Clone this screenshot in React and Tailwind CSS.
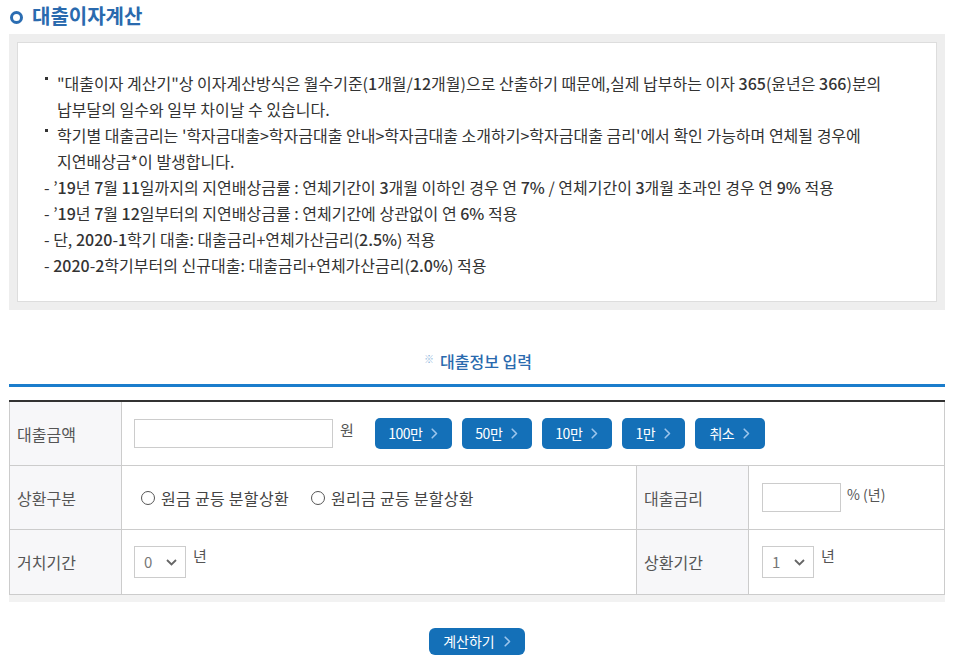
import React from "react";

const font = { fontFamily: '"Noto Sans CJK KR", "Noto Sans", sans-serif' };

function T({ children }) {
  const parts = String(children).split(/(\d+(?:[.]\d+)?%?)/);
  return (
    <>
      {parts.map((p, i) =>
        i % 2 === 1 ? (
          <span key={i} className="font-medium">{p}</span>
        ) : (
          <React.Fragment key={i}>{p}</React.Fragment>
        )
      )}
    </>
  );
}

function Chevron() {
  return (
    <svg width="7" height="11" viewBox="0 0 7 11" fill="none">
      <path d="M1.2 1.2 L5.5 5.5 L1.2 9.8" stroke="#9cc5ec" strokeWidth="1.6" strokeLinecap="round" strokeLinejoin="round" />
    </svg>
  );
}

function Btn({ label, w }) {
  return (
    <button className={`h-[31px] ${w} rounded-[5px] bg-[#1470b8] text-white text-[14px] flex items-center justify-center gap-[9px] tracking-[-0.5px]`}>
      <span>{label}</span>
      <Chevron />
    </button>
  );
}

function Select({ value }) {
  return (
    <div className="w-[52px] h-[32px] border border-[#cccccc] flex items-center justify-between pl-[9px] pr-[8px] text-[15px] text-[#777]">
      <span>{value}</span>
      <svg width="11" height="7" viewBox="0 0 11 7" fill="none">
        <path d="M1 1 L5.5 5.5 L10 1" stroke="#666" strokeWidth="1.8" />
      </svg>
    </div>
  );
}

function Radio({ label }) {
  return (
    <div className="flex items-center gap-[6px]">
      <span className="w-[14px] h-[14px] rounded-full border border-[#555] bg-white"></span>
      <span>{label}</span>
    </div>
  );
}

function Bullet({ children }) {
  return (
    <div className="flex">
      <span className="w-[13px] shrink-0 flex pt-[7px] pl-[1px]">
        <span className="w-[3px] h-[3px] bg-[#333] block"></span>
      </span>
      <div>{children}</div>
    </div>
  );
}

export default function App() {
  return (
    <div className="w-[967px] h-[669px] bg-white pl-[9px] pr-[22px] overflow-hidden text-[#333]" style={font}>
      {/* title */}
      <div className="h-[34px] flex items-center gap-[9px] pl-[1px]">
        <span className="w-[13px] h-[13px] rounded-full border-[3.5px] border-[#2b6db2] mt-[1px]"></span>
        <h1 className="text-[20px] font-bold text-[#2a6aae] leading-none -mt-[2px]">대출이자계산</h1>
      </div>

      {/* notes */}
      <div className="bg-[#eeeeee] p-[8px]">
        <div className="bg-white border border-[#dddddd] pt-[27px] pb-[23px] pl-[26px] text-[16px] leading-[26px]">
          <Bullet>
            <T>"대출이자 계산기"상 이자계산방식은 월수기준(1개월/12개월)으로 산출하기 때문에,실제 납부하는 이자 365(윤년은 366)분의</T>
            <br />
            납부달의 일수와 일부 차이날 수 있습니다.
          </Bullet>
          <Bullet>
            학기별 대출금리는 '학자금대출&gt;학자금대출 안내&gt;학자금대출 소개하기&gt;학자금대출 금리'에서 확인 가능하며 연체될 경우에
            <br />
            지연배상금*이 발생합니다.
          </Bullet>
          <div><T>- ’19년 7월 11일까지의 지연배상금률 : 연체기간이 3개월 이하인 경우 연 7% / 연체기간이 3개월 초과인 경우 연 9% 적용</T></div>
          <div><T>- ’19년 7월 12일부터의 지연배상금률 : 연체기간에 상관없이 연 6% 적용</T></div>
          <div><T>- 단, 2020-1학기 대출: 대출금리+연체가산금리(2.5%) 적용</T></div>
          <div><T>- 2020-2학기부터의 신규대출: 대출금리+연체가산금리(2.0%) 적용</T></div>
        </div>
      </div>

      {/* section title */}
      <div className="mt-[39px] h-[35px] flex justify-center items-start">
        <div className="flex items-center gap-[6px] text-[#2a6aae] text-[16px] font-medium ml-[2px]">
          <span className="text-[10px] text-[#8ab4dc] -mt-[6px]">※</span>
          <span>대출정보 입력</span>
        </div>
      </div>
      <div className="h-[3px] bg-[#1b7dcc]"></div>

      {/* table */}
      <div className="mt-[13px] border-t-2 border-[#333333] text-[16px] text-[#555]">
        <div className="flex h-[64px] border-b border-[#cccccc]">
          <div className="w-[113px] shrink-0 bg-[#f7f7f9] border-l border-r border-[#cccccc] flex items-center pl-[7px]">대출금액</div>
          <div className="flex-1 border-r border-[#cccccc] flex items-center pl-[12px]">
            <div className="w-[199px] h-[29px] border border-[#cccccc]"></div>
            <span className="ml-[7px] -mt-[6px] text-[15px]">원</span>
            <div className="ml-[21px] flex gap-[10px]">
              <Btn label="100만" w="w-[77px]" />
              <Btn label="50만" w="w-[70px]" />
              <Btn label="10만" w="w-[70px]" />
              <Btn label="1만" w="w-[63px]" />
              <Btn label="취소" w="w-[70px]" />
            </div>
          </div>
        </div>
        <div className="flex h-[64px] border-b border-[#cccccc]">
          <div className="w-[113px] shrink-0 bg-[#f7f7f9] border-l border-r border-[#cccccc] flex items-center pl-[7px]">상환구분</div>
          <div className="w-[514px] shrink-0 flex items-center pl-[19px] gap-[22px] text-[#444] tracking-[0.3px]">
            <Radio label="원금 균등 분할상환" />
            <Radio label="원리금 균등 분할상환" />
          </div>
          <div className="w-[113px] shrink-0 bg-[#f7f7f9] border-l border-r border-[#cccccc] flex items-center pl-[7px]">대출금리</div>
          <div className="flex-1 border-r border-[#cccccc] flex items-center pl-[13px]">
            <div className="w-[79px] h-[29px] border border-[#cccccc]"></div>
            <span className="ml-[6px] -mt-[6px] text-[14px]">% (년)</span>
          </div>
        </div>
        <div className="flex h-[65px] border-b border-[#cccccc]">
          <div className="w-[113px] shrink-0 bg-[#f7f7f9] border-l border-r border-[#cccccc] flex items-center pl-[7px]">거치기간</div>
          <div className="w-[514px] shrink-0 flex items-center pl-[12px]">
            <Select value="0" />
            <span className="ml-[7px] -mt-[12px] text-[15px]">년</span>
          </div>
          <div className="w-[113px] shrink-0 bg-[#f7f7f9] border-l border-r border-[#cccccc] flex items-center pl-[7px]">상환기간</div>
          <div className="flex-1 border-r border-[#cccccc] flex items-center pl-[13px]">
            <Select value="1" />
            <span className="ml-[7px] -mt-[12px] text-[15px]">년</span>
          </div>
        </div>
        <div className="h-[7px] bg-[#f2f2f2]"></div>
      </div>

      <div className="mt-[26px] flex justify-center">
        <button className="h-[27px] w-[96px] rounded-[6px] bg-[#1470b8] text-white text-[14px] flex items-center justify-center gap-[9px]">
          <span>계산하기</span>
          <Chevron />
        </button>
      </div>
    </div>
  );
}
